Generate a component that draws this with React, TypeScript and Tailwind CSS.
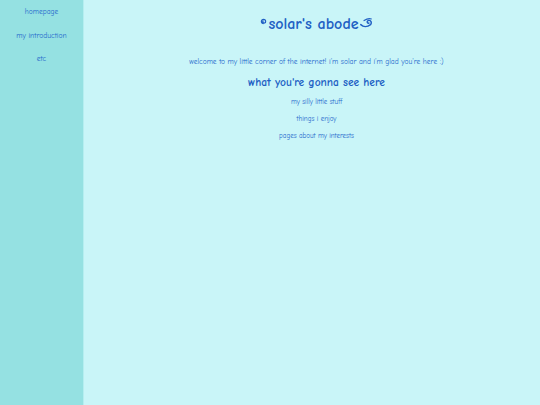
import React from "react";

const font = { fontFamily: '"Comic Sans MS", "Comic Neue", "DejaVu Sans", sans-serif' };

export default function App() {
  return (
    <div className="flex w-[540px] h-[405px] bg-[#c9f5f8] text-[#2468cc]" style={font}>
      <div className="w-[84px] shrink-0 bg-[#95e1e2] flex flex-col items-center pt-[6px] gap-[12.5px] text-[7.5px] border-r border-[#b5eef0]">
        <a className="leading-[11px] font-medium">homepage</a>
        <a className="leading-[11px] font-medium">my introduction</a>
        <a className="leading-[11px] font-medium">etc</a>
      </div>
      <div className="flex-1 flex flex-col items-center pl-[9px]">
        <div className="mt-[14px] flex items-center text-[16px] font-bold text-[#2160c4] leading-[20px]">
          <svg width="7" height="7" viewBox="0 0 10 10" className="mr-[1px] -mt-[5px]">
            <path d="M5 8 A3 3 0 1 1 8 5 A2 2 0 1 1 5 3.5" fill="none" stroke="#2160c4" strokeWidth="1.8" />
          </svg>
          <span>solar's abode</span>
          <svg width="13" height="12" viewBox="0 0 16 14" className="ml-[1px] -mt-[3px]">
            <path d="M1 9 C4 12 9 12 13 9 C15 6 13 3 10 4 C8 5 9 8 11 7" fill="none" stroke="#2160c4" strokeWidth="1.8" strokeLinecap="round" />
            <path d="M5 4 C8 2 11 1 14 2" fill="none" stroke="#2160c4" strokeWidth="1.4" strokeLinecap="round" />
          </svg>
        </div>
        <p className="mt-[23px] text-[7.5px] leading-[10px] font-medium">welcome to my little corner of the internet! i'm solar and i'm glad you're here :)</p>
        <h2 className="mt-[9px] text-[11.5px] font-bold leading-[14px] text-[#2160c4]">what you're gonna see here</h2>
        <div className="mt-[7px] flex flex-col items-center gap-[7px] text-[7px] leading-[10px] font-medium">
          <span>my silly little stuff</span>
          <span>things i enjoy</span>
          <span>pages about my interests</span>
        </div>
      </div>
    </div>
  );
}
